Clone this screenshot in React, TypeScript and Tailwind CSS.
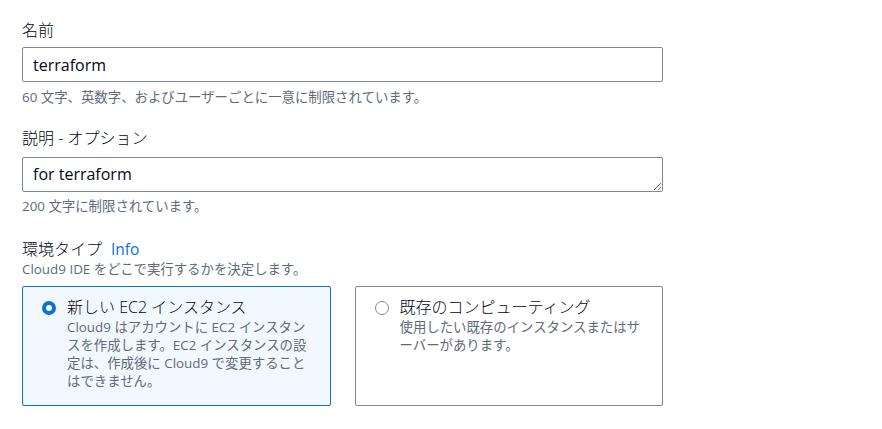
const font = { fontFamily: '"Open Sans", "Noto Sans CJK JP", sans-serif' };

const Radio = ({ checked }: { checked: boolean }) =>
  checked ? (
    <span className="mt-[5px] block h-[14px] w-[14px] shrink-0 rounded-full border-[4px] border-[#0972d3] bg-white" />
  ) : (
    <span className="mt-[5px] block h-[14px] w-[14px] shrink-0 rounded-full border-[1.5px] border-[#7d8998] bg-white" />
  );

const Card = ({
  checked,
  title,
  desc,
}: {
  checked: boolean;
  title: string;
  desc: string;
}) => (
  <div
    className={
      checked
        ? "h-[120px] rounded-[2px] border border-[#0972d3] bg-[#f1f8fe] pl-[19px] pr-[20px] pt-[9px]"
        : "h-[120px] rounded-[2px] border border-[#7d8998] bg-white pl-[19px] pr-[20px] pt-[9px]"
    }
  >
    <div className="flex gap-[11px]">
      <Radio checked={checked} />
      <div>
        <div className="text-[16px] font-light leading-[22px] text-[#000716]">{title}</div>
        <div className="text-[13.4px] leading-[18px] text-[#5f6b7a]">{desc}</div>
      </div>
    </div>
  </div>
);

export default function App() {
  return (
    <div className="min-h-screen bg-white pl-[22px] pt-[19px]" style={font}>
      <div className="w-[641px]">
        {/* 名前 */}
        <div className="text-[16px] font-light leading-[22px] text-[#000716]">名前</div>
        <input
          defaultValue="terraform"
          className="mt-[6px] block h-[35px] w-full rounded-[2px] border border-[#7d8998] px-[10px] text-[16px] text-[#000716] outline-none"
          style={font}
        />
        <div className="mt-[6px] text-[13.4px] leading-[18px] text-[#5f6b7a]">
          60 文字、英数字、およびユーザーごとに一意に制限されています。
        </div>

        {/* 説明 */}
        <div className="mt-[21px] text-[16px] font-light leading-[22px] text-[#000716]">説明 - オプション</div>
        <textarea
          defaultValue="for terraform"
          rows={1}
          className="mt-[8px] block h-[35px] w-full rounded-[2px] border border-[#7d8998] px-[10px] py-[5px] text-[16px] leading-[22px] text-[#000716] outline-none"
          style={font}
        />
        <div className="mt-[5px] text-[13.4px] leading-[18px] text-[#5f6b7a]">200 文字に制限されています。</div>

        {/* 環境タイプ */}
        <div className="mt-[23px] flex items-baseline gap-[9px] text-[16px] leading-[22px]">
          <span className="font-light text-[#000716]">環境タイプ</span>
          <span className="text-[15.5px] text-[#0972d3]">Info</span>
        </div>
        <div className="text-[13.4px] leading-[18px] text-[#5f6b7a]">Cloud9 IDE をどこで実行するかを決定します。</div>

        <div className="mt-[8px] grid grid-cols-2 gap-[24px]">
          <Card
            checked
            title="新しい EC2 インスタンス"
            desc="Cloud9 はアカウントに EC2 インスタンスを作成します。EC2 インスタンスの設定は、作成後に Cloud9 で変更することはできません。"
          />
          <Card
            checked={false}
            title="既存のコンピューティング"
            desc="使用したい既存のインスタンスまたはサーバーがあります。"
          />
        </div>
      </div>
    </div>
  );
}
